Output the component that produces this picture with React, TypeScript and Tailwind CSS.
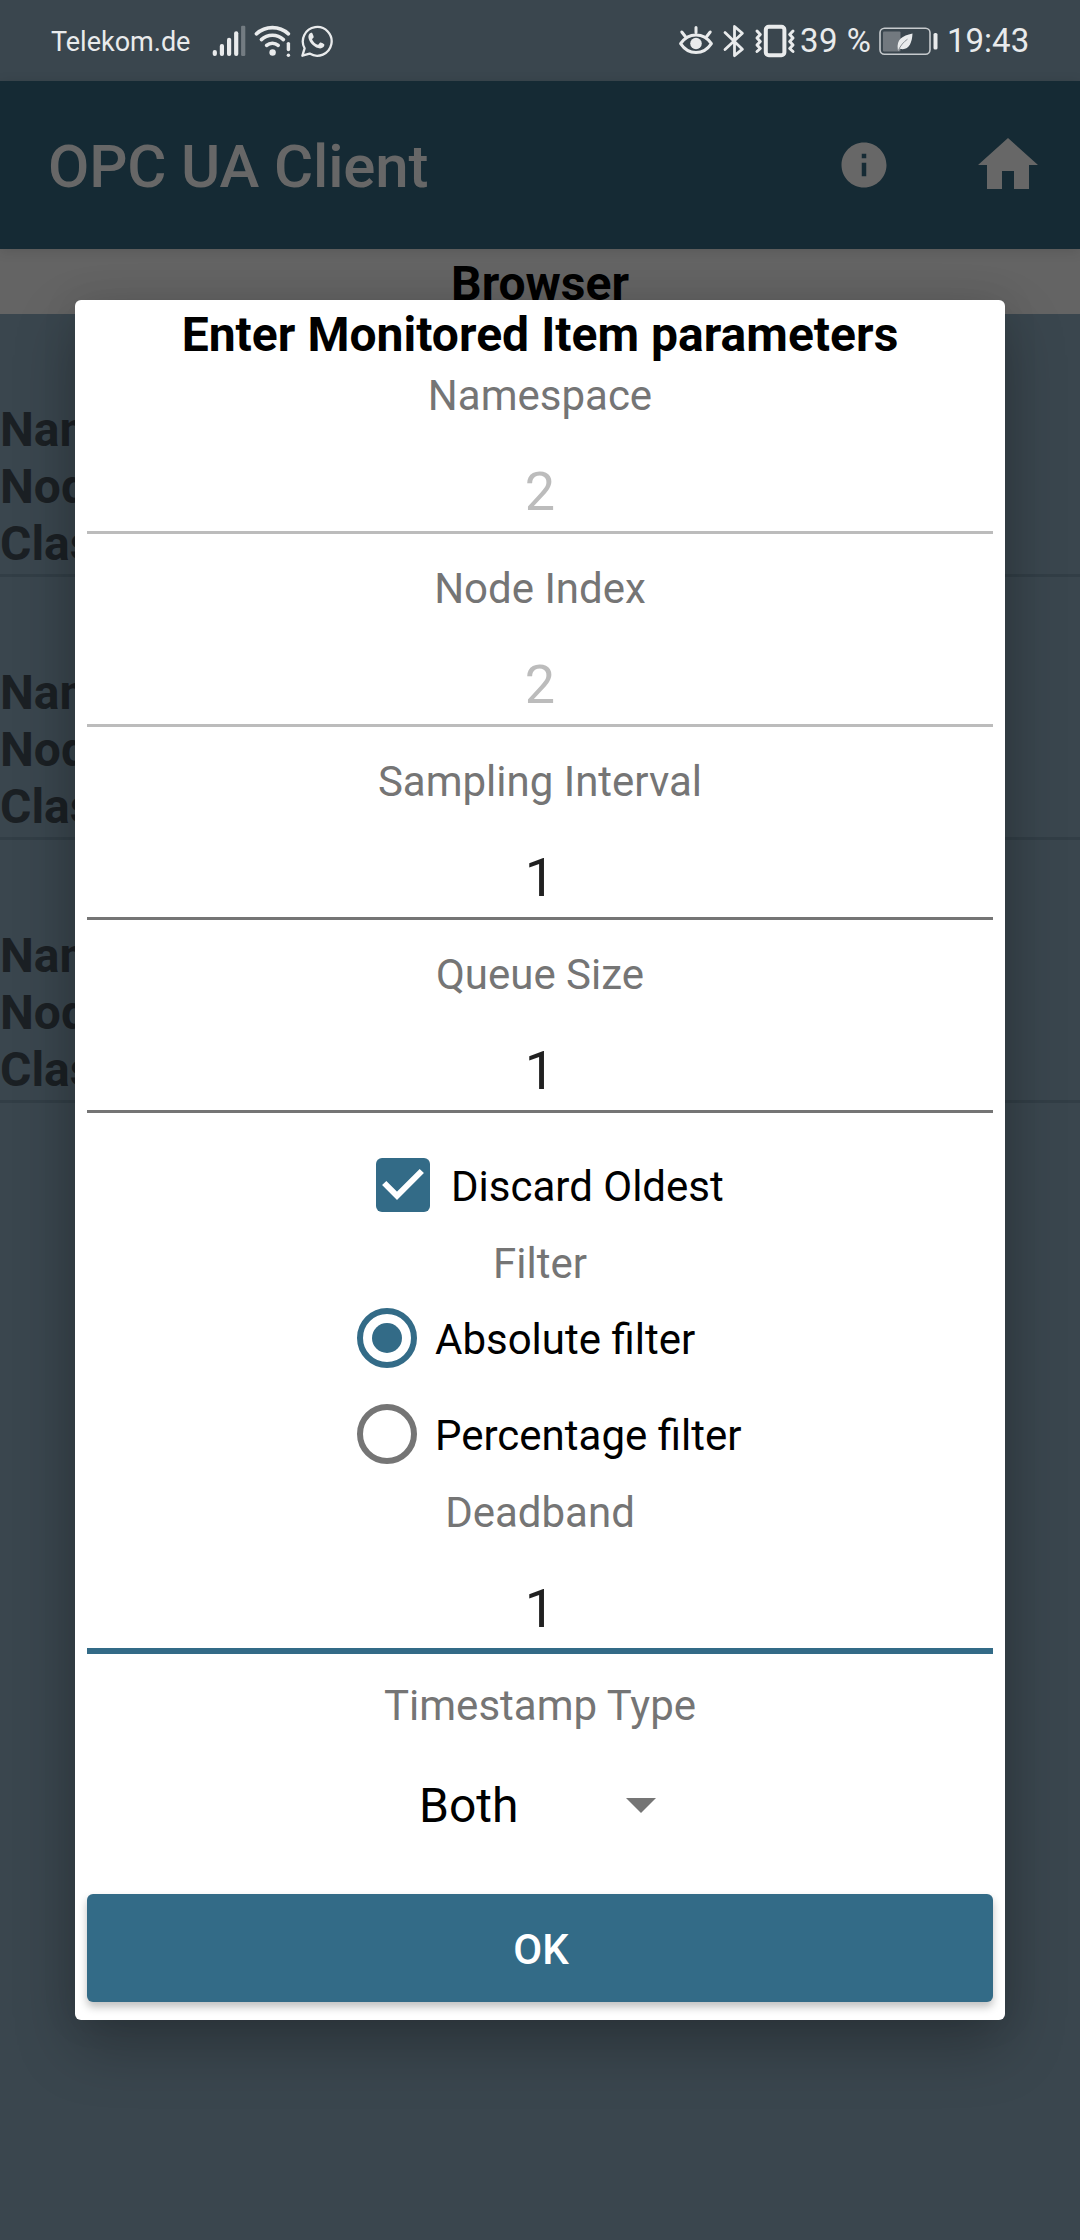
import type { ReactNode } from "react";

function StatusBar() {
  return (
    <div className="flex h-[81px] items-center justify-between bg-[#3a464e] text-[#e9ebec]">
      <div className="flex h-full items-center pl-[51px]">
        <span className="w-[146px] pt-[2px] text-[27px] leading-[32px]">Telekom.de</span>
        <svg className="ml-[15px] h-[32px] w-[34px]" viewBox="0 0 34 32" fill="#e9ebec">
          <rect x="0.7" y="25" width="4.2" height="6" rx="2" />
          <rect x="7.8" y="19" width="4.2" height="12" rx="2" />
          <rect x="15" y="12.7" width="4.2" height="18.3" rx="2" />
          <rect x="22.1" y="6.3" width="4.2" height="24.7" rx="2" />
          <rect x="29.1" y="0.7" width="4.2" height="30.3" rx="1.2" opacity="0.33" />
        </svg>
        <svg className="ml-[8px] h-[32px] w-[38px]" viewBox="0 0 38 32" fill="none" stroke="#e9ebec" strokeLinecap="round" strokeWidth="3.6">
          <path d="M2.4 8.9A23.6 23.6 0 0 1 34.4 8.9" />
          <path d="M7.4 14.6A16 16 0 0 1 29.4 14.6" />
          <path d="M12.6 20.4A8.8 8.8 0 0 1 24.2 20.4" />
          <circle cx="18.6" cy="27.5" r="3.2" fill="#e9ebec" stroke="none" />
          <path d="M34.4 18.6V24.6" strokeWidth="3.4" />
          <circle cx="34.4" cy="30.2" r="1.7" fill="#e9ebec" stroke="none" />
        </svg>
        <svg className="ml-[8px] h-[34px] w-[34px]" viewBox="0 0 34 34">
          <path
            d="M2.4 31.7L4.6 24.3A14.4 14.4 0 1 1 9.600 29.6Z"
            fill="none"
            stroke="#e9ebec"
            strokeWidth="2.3"
            strokeLinejoin="round"
          />
          <path
            d="M11 8.8C9 9.6 8.1 11.5 8.5 14C9.4 19 15.2 24.2 20 24.4C22.3 24.5 24.4 23 24.4 20.8C24.4 20.1 20.8 18.3 20.2 18.6C19.4 19 18.7 21 17.8 20.8C15.4 20 13 17.6 12.1 15.5C11.9 14.8 13.7 13.8 13.7 13C13.7 12.2 12.4 9 12 8.8C11.7 8.7 11.4 8.7 11 8.8Z"
            fill="#e9ebec"
          />
        </svg>
      </div>
      <div className="flex h-full items-center pr-[50px]">
        <svg className="h-[34px] w-[36px]" viewBox="0 0 36 34" fill="none" stroke="#e9ebec" strokeWidth="3" strokeLinecap="round">
          <path d="M2.6 19.6C10.5 8 25.5 8 33.4 19.6C25.5 31.5 10.5 31.5 2.6 19.6Z" strokeLinejoin="round" />
          <circle cx="18" cy="19.5" r="5.8" fill="#e9ebec" stroke="none" />
          <path d="M18 3.5V8.5M3.8 8L7.3 12.5M32.2 8L28.7 12.5" />
        </svg>
        <svg className="ml-[9px] h-[34px] w-[22px]" viewBox="0 0 22 34" fill="none" stroke="#e9ebec" strokeWidth="2.8" strokeLinejoin="round" strokeLinecap="round">
          <path d="M2 8.6L19.4 25.2L11.5 31.7V2.5L19.4 9.2L2 25.6" />
        </svg>
        <svg className="ml-[9px] h-[34px] w-[42px]" viewBox="0 0 42 34" fill="none" stroke="#e9ebec" strokeLinecap="round" strokeLinejoin="round">
          <rect x="11.8" y="2.700" width="18.6" height="28.6" rx="3" strokeWidth="4" />
          <path d="M3 7L6.3 10.5L3 14L6.3 17.5L3 21L6.3 24.5L3 27.5" strokeWidth="3" />
          <path d="M39 7L35.7 10.5L39 14L35.7 17.500L39 21L35.7 24.5L39 27.5" strokeWidth="3" />
        </svg>
        <span className="ml-[4px] w-[72px] whitespace-nowrap pt-px text-[33px] leading-[38px] tracking-[0.5px]">39 %</span>
        <svg className="ml-[7px] h-[30px] w-[60px]" viewBox="0 0 60 30">
          <rect x="1" y="2.2" width="50" height="26" rx="4.5" fill="none" stroke="#c6cacd" strokeWidth="1.6" />
          <rect x="4" y="5.5" width="17.5" height="20" rx="1" fill="#72797f" />
          <path d="M18.8 23.5C17.5 13 23 10 33.5 7.5C33 17.5 29.5 25 20.8 22.8L19.3 25Z" fill="#e9ebec" />
          <path d="M19.3 24.5C21.5 19.5 24.5 16 28.5 13.2" stroke="#72797f" strokeWidth="0.8" fill="none" />
          <rect x="54.5" y="7" width="4" height="16.5" rx="1.6" fill="#e9ebec" />
        </svg>
        <span className="ml-[8px] w-[83px] whitespace-nowrap pt-px text-[33px] leading-[38px]">19:43</span>
      </div>
    </div>
  );
}

function AppBar() {
  return (
    <header className="relative flex h-[168px] items-center bg-[#152a34] pr-9 pl-12 text-[#676767] shadow-[0_2px_12px_rgba(0,0,0,0.12)]">
      <h1 className="flex-1 pt-1 text-[60px] leading-[70px] font-medium tracking-[-0.15px]">OPC UA Client</h1>
      <svg className="mr-[81px] h-[54px] w-[54px]" viewBox="0 0 24 24" fill="currentColor">
        <path d="M12 2C6.48 2 2 6.48 2 12s4.48 10 10 10 10-4.48 10-10S17.52 2 12 2zm1 15h-2v-6h2v6zm0-8h-2V7h2v2z" />
      </svg>
      <svg className="h-[72px] w-[72px]" viewBox="0 0 24 24" fill="currentColor">
        <path d="M10 20v-6h4v6h5v-8h3L12 3 2 12h3v8z" />
      </svg>
    </header>
  );
}

function NodeEntry() {
  return (
    <li className="flex h-[263px] flex-col justify-end border-b-[3px] border-[#323e46] pb-[2px] text-[48px] leading-[57px] font-bold text-[#1b2024]">
      <span>Name</span>
      <span>Node</span>
      <span>Class</span>
    </li>
  );
}

function Label({ children }: { children: ReactNode }) {
  return <div className="h-[54px] text-center text-[42px] leading-[54px] text-[#757575]">{children}</div>;
}

type FieldState = "disabled" | "normal" | "focused";

const inputStyles: Record<FieldState, string> = {
  disabled: "border-b-[3px] border-[#bcbcbc] h-[82px] mb-[28px] text-[#bcbcbc]",
  normal: "border-b-[3px] border-[#757575] h-[82px] mb-[28px] text-[#212121]",
  focused: "border-b-[6px] border-[#336b87] h-[85px] mb-[25px] text-[#212121]",
};

function Field({ label, value, state }: { label: string; value: string; state: FieldState }) {
  return (
    <div className="px-3">
      <Label>{label}</Label>
      <div className={`mt-[29px] text-center text-[54px] leading-[79px] ${inputStyles[state]}`}>{value}</div>
    </div>
  );
}

function Radio({ label, checked }: { label: string; checked: boolean }) {
  return (
    <div className="flex h-[96px] items-center pl-[282px]">
      <span
        className={`flex h-[60px] w-[60px] items-center justify-center rounded-full border-[6px] ${
          checked ? "border-[#336b87]" : "border-[#757575]"
        }`}
      >
        {checked && <span className="h-[30px] w-[30px] rounded-full bg-[#336b87]" />}
      </span>
      <span className="ml-[18px] pt-1 text-[42px] leading-[54px] text-black">{label}</span>
    </div>
  );
}

function ParametersDialog() {
  return (
    <div className="absolute top-[300px] left-[75px] flex h-[1720px] w-[930px] flex-col rounded-[6px] bg-white shadow-[0_26px_60px_rgba(0,0,0,0.25),0_0_36px_rgba(0,0,0,0.09)]">
      <h2 className="h-[69px] text-center text-[48px] leading-[69px] font-bold tracking-[0.03px] text-black">Enter Monitored Item parameters</h2>
      <Field label="Namespace" value="2" state="disabled" />
      <Field label="Node Index" value="2" state="disabled" />
      <Field label="Sampling Interval" value="1" state="normal" />
      <Field label="Queue Size" value="1" state="normal" />
      <div className="mb-2 flex h-[88px] items-center pl-[301px]">
        <span className="flex h-[54px] w-[54px] items-center justify-center rounded-[6px] bg-[#336b87]">
          <svg className="h-[54px] w-[54px]" viewBox="0 0 54 54" fill="none" stroke="#fff" strokeWidth="6">
            <path d="M8.2 25L21 37.8L45.8 13" />
          </svg>
        </span>
        <span className="ml-[21px] pt-1 text-[42px] leading-[54px] text-black">Discard Oldest</span>
      </div>
      <div className="h-[53px]">
        <Label>Filter</Label>
      </div>
      <Radio label="Absolute filter" checked />
      <Radio label="Percentage filter" checked={false} />
      <div className="mt-1">
        <Field label="Deadband" value="1" state="focused" />
      </div>
      <Label>Timestamp Type</Label>
      <div className="flex h-[144px] items-center pl-[344px]">
        <span className="w-[207px] pt-[2px] text-[48px] leading-[56px] text-black">Both</span>
        <svg className="h-[15px] w-[30px]" viewBox="0 0 30 15" fill="#757575">
          <path d="M0 0H30L15 15Z" />
        </svg>
      </div>
      <button className="mx-3 mt-[17px] h-[108px] rounded-[6px] bg-[#336b87] pt-[2px] pl-[2px] text-[42px] leading-[49px] font-medium text-white shadow-[0_5px_8px_rgba(0,0,0,0.25)]">
        OK
      </button>
    </div>
  );
}

export default function App() {
  return (
    <div className="relative h-[2240px] w-[1080px] overflow-hidden bg-[#3a464e] font-[Roboto,sans-serif]">
      <StatusBar />
      <AppBar />
      <div className="h-[65px] bg-[#646464] pt-[6px] text-center text-[48px] leading-[57px] font-bold text-black">Browser</div>
      <ul>
        <NodeEntry />
        <NodeEntry />
        <NodeEntry />
      </ul>
      <ParametersDialog />
    </div>
  );
}
